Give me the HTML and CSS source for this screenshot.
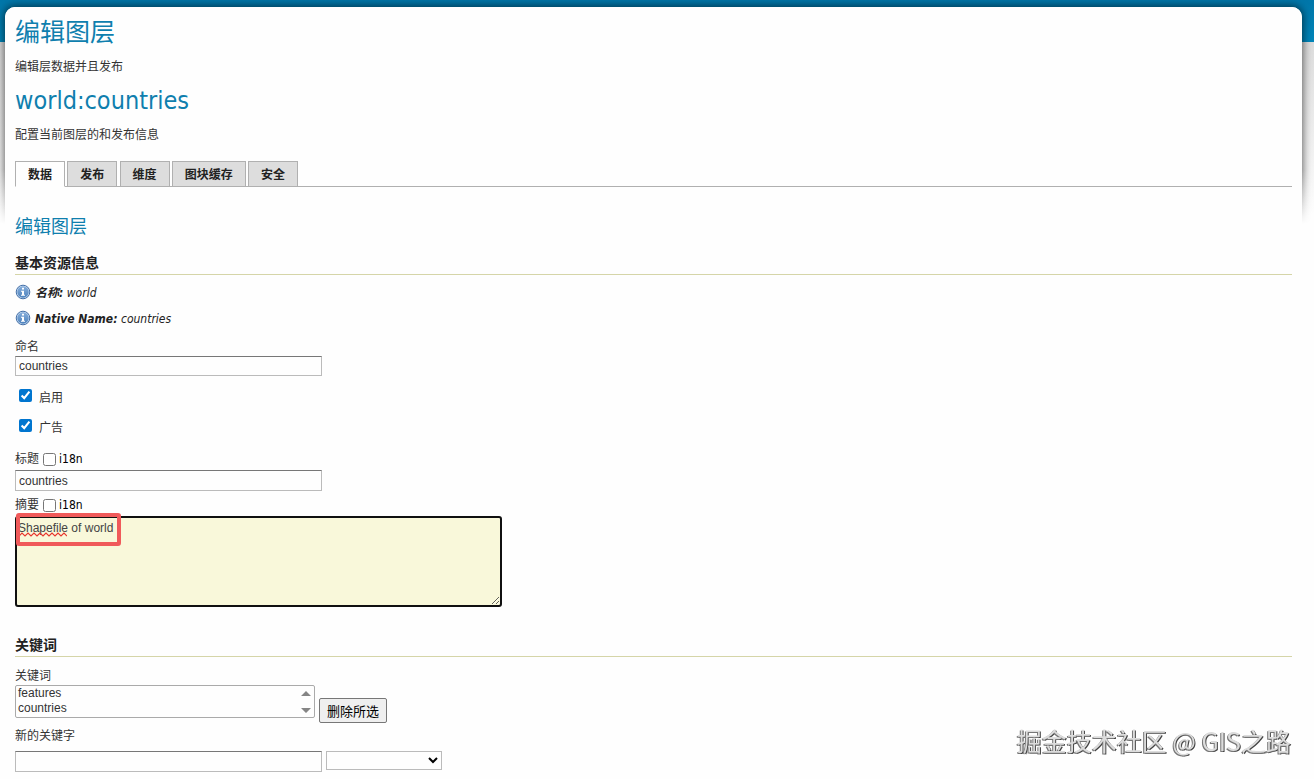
FILE: index.html
```html
<!DOCTYPE html>
<html lang="zh-CN">
<head>
<meta charset="utf-8">
<title>编辑图层</title>
<meta name="viewport" content="width=device-width, initial-scale=1">
<link rel="stylesheet" href="styles.css">
</head>
<body>
<div class="backdrop" aria-hidden="true"><div class="backdrop-fade"><div class="backdrop-card"></div></div></div>
<svg class="defs" aria-hidden="true">
  <defs>
    <linearGradient id="info-fill" x1="0" y1="0" x2="0" y2="1">
      <stop offset="0" stop-color="#86aedb"/><stop offset="1" stop-color="#4d82bd"/>
    </linearGradient>
    <symbol id="info" viewBox="0 0 16 16">
      <circle cx="8" cy="8" r="6.8" fill="#c4d8ee" stroke="#4470a8" stroke-width="1"/>
      <circle cx="8" cy="8" r="5.7" fill="url(#info-fill)"/>
      <path d="M7 3.8h2v1.8H7zM6 6.7h3v4h1v1.1H6v-1.1h1V7.8H6z" fill="#fff"/>
    </symbol>
  </defs>
</svg>
<main class="sheet">
  <header>
    <h1 class="title">编辑图层</h1>
    <p class="lead">编辑层数据并且发布</p>
    <h1 class="title">world:countries</h1>
    <p class="lead">配置当前图层的和发布信息</p>
  </header>
  <nav>
    <ul class="tabs">
      <li class="tab"><a class="tab-link tab-current" href="#data">数据</a></li>
      <li class="tab"><a class="tab-link" href="#publishing">发布</a></li>
      <li class="tab"><a class="tab-link" href="#dimensions">维度</a></li>
      <li class="tab"><a class="tab-link" href="#tiles">图块缓存</a></li>
      <li class="tab"><a class="tab-link" href="#security">安全</a></li>
    </ul>
  </nav>
  <form class="form" id="data">
    <h2 class="panel-title">编辑图层</h2>
    <section>
      <h3 class="section-title">基本资源信息</h3>
      <p class="fact"><svg class="info"><use href="#info"/></svg><span><b>名称:</b> world</span></p>
      <p class="fact"><svg class="info"><use href="#info"/></svg><span><b>Native Name:</b> countries</span></p>
      <label class="label label-name" for="name">命名</label>
      <input class="text" id="name" type="text" value="countries">
      <div class="check"><input class="box" id="enabled" type="checkbox" checked><label for="enabled">启用</label></div>
      <div class="check"><input class="box" id="advertised" type="checkbox" checked><label for="advertised">广告</label></div>
      <div class="label-row label-title">
        <label for="title">标题</label><input class="box" id="title-i18n" type="checkbox"><label class="i18n" for="title-i18n">i18n</label>
      </div>
      <input class="text text-tall" id="title" type="text" value="countries">
      <div class="label-row">
        <label for="abstract">摘要</label><input class="box" id="abstract-i18n" type="checkbox"><label class="i18n" for="abstract-i18n">i18n</label>
      </div>
      <div class="abstract">
        <textarea class="area" id="abstract" spellcheck="false">Shapefile of world</textarea>
        <svg class="squiggle" viewBox="0 0 48 5" aria-hidden="true"><path d="M0 4L3 1L6 4L9 1L12 4L15 1L18 4L21 1L24 4L27 1L30 4L33 1L36 4L39 1L42 4L45 1L48 4" fill="none" stroke="#e8382f" stroke-width="1.2"/></svg>
        <span class="marker"></span>
      </div>
    </section>
    <section class="keywords">
      <h3 class="section-title">关键词</h3>
      <label class="label label-keywords" for="keywords">关键词</label>
      <div class="list-row">
        <div class="list-wrap">
          <select class="list" id="keywords" size="2" multiple><option>features</option><option>countries</option></select>
          <svg class="arrows" viewBox="0 0 10 24" aria-hidden="true"><path d="M0 6L5 1L10 6zM0 18L5 23L10 18z" fill="#858585"/></svg>
        </div>
        <button class="button" type="button">删除所选</button>
      </div>
      <label class="label label-new" for="new-keyword">新的关键字</label>
      <div class="new-row">
        <input class="text text-tall" id="new-keyword" type="text">
        <div class="drop-wrap">
          <select class="drop" aria-label="语言"><option></option></select>
          <svg class="chevron" viewBox="0 0 10 7" aria-hidden="true"><path d="M1 1L5 5L9 1" fill="none" stroke="#000" stroke-width="2"/></svg>
        </div>
      </div>
    </section>
  </form>
</main>
<div class="watermark">掘金技术社区 @ GIS之路</div>
</body>
</html>
```
FILE: styles.css
```css
* { box-sizing: border-box; }
body {
  margin: 0;
  background: #fefefe;
  color: #333;
  font: 12px/18px "DejaVu Sans Condensed", "Noto Sans CJK SC", sans-serif;
}
h1, h2, h3, p, ul { margin: 0; padding: 0; font-weight: normal; }
.defs { position: absolute; width: 0; height: 0; }

/* blue band, grey fade and the shadow around the sheet */
.backdrop {
  position: absolute;
  z-index: -1;
  top: 0;
  left: 0;
  right: 0;
  height: 225px;
  overflow: hidden;
  background: linear-gradient(#0076a9, #0085b9) 0 0 / 100% 42px no-repeat,
    linear-gradient(#dcdcdc 42px, #fefefe 215px);
}
.backdrop-fade {
  height: 225px;
  padding: 7px 12px 0 5px;
  overflow: hidden;
  mask-image: linear-gradient(#000 170px, transparent 224px);
}
.backdrop-card {
  height: 300px;
  border-radius: 10px;
  background: #fefefe;
  box-shadow: 0 0 8px 1px rgba(0, 0, 0, .6);
}
.sheet {
  margin: 7px 12px 0 5px;
  padding: 8px 10px 6px;
  border-radius: 10px 10px 0 0;
  background: #fefefe;
}
.title {
  margin-bottom: 7px;
  color: #0f7fae;
  font-size: 25px;
  line-height: 36px;
}
.lead { margin-bottom: 7px; }

.tabs {
  height: 26px;
  margin-top: 17px;
  border-bottom: 1px solid #b0b0b0;
  font-family: "Liberation Sans", sans-serif;
  font-size: 8px;
  line-height: 24px;
  list-style: none;
}
.tab { display: inline-block; vertical-align: top; }
.tab-link {
  display: block;
  height: 26px;
  padding: 0 12px;
  border: 1px solid #b0b0b0;
  background: #ddd;
  color: #222;
  font: bold 12px/24px "Noto Sans CJK SC", sans-serif;
  text-decoration: none;
}
.tab-current { border-bottom-color: #fefefe; background: #fefefe; }

.panel-title {
  margin: 27px 0 12px;
  color: #0f7fae;
  font-size: 18px;
  line-height: 26px;
}
.section-title {
  height: 23px;
  margin-bottom: 9px;
  border-bottom: 1px solid #d5d5a8;
  color: #222;
  font-size: 14px;
  font-weight: bold;
  line-height: 22px;
}
.fact {
  display: flex;
  align-items: flex-start;
  gap: 4px;
  margin-bottom: 8px;
  color: #222;
  font-style: italic;
}
.info { width: 16px; height: 16px; }

.label { display: block; }
.label-name { margin-top: 10px; }
.label-keywords { margin-top: 10px; }
.label-new { margin-top: 4px; }
.text {
  display: block;
  width: 307px;
  height: 20px;
  padding: 0 3px;
  border: 1px solid #bbb;
  border-top-color: #777;
  background: #fefefe;
  color: #333;
  font: 12px "Liberation Sans", sans-serif;
}
.text-tall { height: 21px; }
.box { width: 13px; height: 13px; margin: 0 4px; accent-color: #0075cf; }
.check {
  display: flex;
  align-items: flex-start;
  gap: 3px;
  height: 18px;
  margin-top: 13px;
}
.check + .check { margin-top: 12px; }
.label-row { display: flex; align-items: center; margin-top: 5px; }
.label-title { margin-top: 13px; margin-bottom: 2px; }
.label-row .box { margin-right: 3px; }
.i18n { color: #000; }

.abstract { position: relative; width: 487px; margin-top: 2px; }
.area {
  display: block;
  width: 100%;
  height: 91px;
  padding: 3px 1px;
  border: 2px solid #101010;
  border-radius: 3px;
  background: #f9f8da;
  color: #444;
  font: 12px/15px "Liberation Sans", sans-serif;
}
.squiggle { position: absolute; top: 16px; left: 4px; width: 48px; height: 5px; }
.marker {
  position: absolute;
  top: -3px;
  left: 1px;
  width: 105px;
  height: 33px;
  border: 4px solid #f05a5a;
  border-radius: 3px;
}

.keywords { margin-top: 27px; }
.list-row { display: flex; align-items: flex-start; gap: 4px; }
.list-wrap { position: relative; width: 300px; }
.list {
  display: block;
  width: 100%;
  height: 33px;
  padding: 0;
  overflow: hidden;
  border: 1px solid #aaa;
  border-radius: 2px;
  background: #fefefe;
  color: #333;
  font: 12px/15px "Liberation Sans", sans-serif;
}
.list option { height: 15px; min-height: 15px; padding: 0 2px; }
.arrows { position: absolute; top: 5px; right: 4px; width: 10px; height: 24px; }
.button {
  height: 25px;
  margin-top: 13px;
  padding: 0 7px;
  border: 1px solid #777;
  border-radius: 2px;
  background: #efefef;
  color: #000;
  font: 13px "Noto Sans CJK SC", sans-serif;
}
.new-row { display: flex; align-items: flex-start; gap: 4px; margin-top: 6px; }
.drop-wrap { position: relative; width: 116px; }
.drop {
  display: block;
  width: 100%;
  height: 19px;
  border: 1px solid #bbb;
  border-radius: 0;
  background: #fefefe;
  appearance: none;
}
.chevron { position: absolute; top: 6px; right: 4px; width: 10px; height: 7px; pointer-events: none; }

.watermark {
  position: fixed;
  right: 23px;
  bottom: 21px;
  color: #dcdcdc;
  font: 25px/36px "Noto Sans CJK SC", sans-serif;
  text-shadow: -1px 1px 0 #777, 1px 1px 0 #444;
  pointer-events: none;
}
```
